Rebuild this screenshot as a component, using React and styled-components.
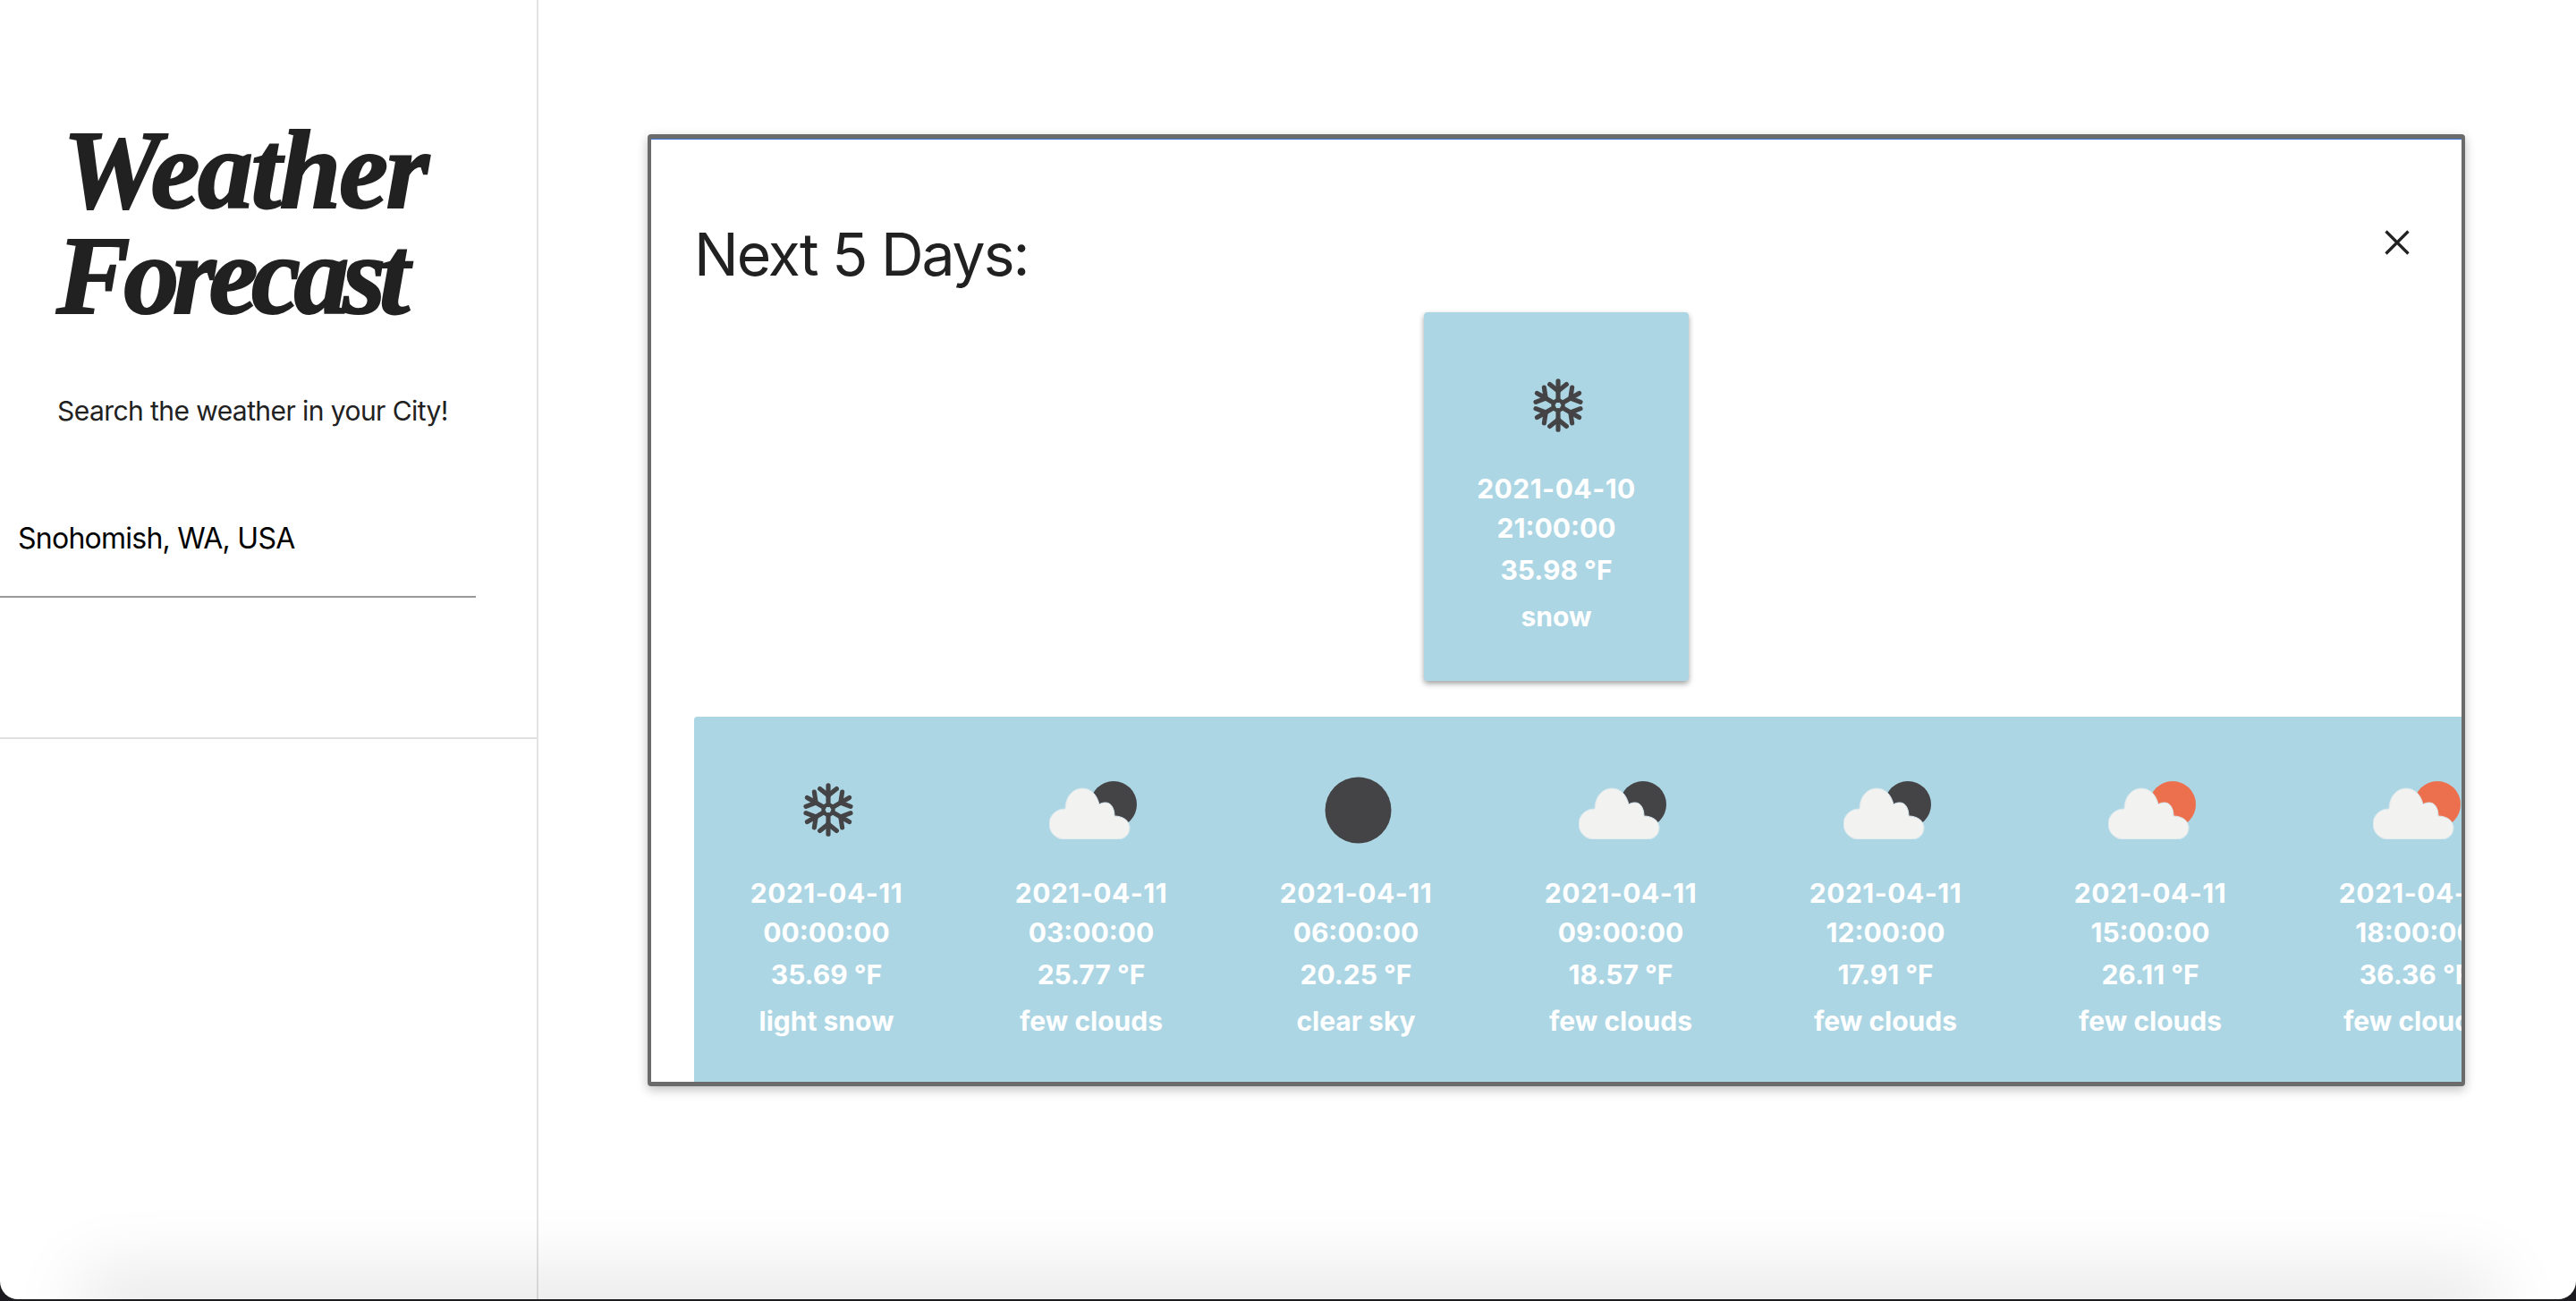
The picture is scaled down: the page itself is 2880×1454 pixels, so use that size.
import styled, { createGlobalStyle } from 'styled-components';

const GlobalStyle = createGlobalStyle`
  html, body {
    margin: 0;
    height: 100%;
    background: #fff;
    overflow: hidden;
    font-family: Inter, "Liberation Sans", sans-serif;
    color: #212121;
  }
`;

const forecast = [
  { date: '2021-04-11', time: '00:00:00', temp: '35.69 °F', desc: 'light snow', icon: 'snow' },
  { date: '2021-04-11', time: '03:00:00', temp: '25.77 °F', desc: 'few clouds', icon: 'cloudNight' },
  { date: '2021-04-11', time: '06:00:00', temp: '20.25 °F', desc: 'clear sky', icon: 'moon' },
  { date: '2021-04-11', time: '09:00:00', temp: '18.57 °F', desc: 'few clouds', icon: 'cloudNight' },
  { date: '2021-04-11', time: '12:00:00', temp: '17.91 °F', desc: 'few clouds', icon: 'cloudNight' },
  { date: '2021-04-11', time: '15:00:00', temp: '26.11 °F', desc: 'few clouds', icon: 'cloudDay' },
  { date: '2021-04-11', time: '18:00:00', temp: '36.36 °F', desc: 'few clouds', icon: 'cloudDay' },
];

const Snowflake = () => (
  <svg width="60" height="60" viewBox="0 0 64 64" fill="none" stroke="#444446" strokeWidth="5.5" strokeLinecap="round">
    <circle cx="32" cy="32" r="6" strokeWidth="4.5" />
    {[0, 60, 120, 180, 240, 300].map((a) => (
      <g key={a} transform={`rotate(${a} 32 32)`}>
        <path d="M32 26V3" />
        <path d="M32 15L22 7" />
        <path d="M32 15L42 7" />
      </g>
    ))}
  </svg>
);

const Moon = () => (
  <svg width="75" height="75" viewBox="0 0 76 76">
    <circle cx="38" cy="38" r="37.5" fill="#444446" />
  </svg>
);

const CloudSun = ({ color }) => (
  <svg width="98" height="65" viewBox="0 0 98 65">
    <circle cx="72" cy="26" r="26" fill={color} />
    <path
      d="M17 65C7.6 65 0 57.4 0 48C0 38.6 7.6 31 17 31L18 31C18 18 26 8 37 8C46 8 53 14 56 26C58 24.5 60.5 24 63 24C69 24 73 30 73 39C82 39 90 44 90 52C90 60 84 65 77 65Z"
      fill="#f2f2f0"
      stroke="#d5e6ec"
      strokeWidth="1"
    />
  </svg>
);

const WeatherIcon = ({ name }) => {
  if (name === 'snow') return <Snowflake />;
  if (name === 'moon') return <Moon />;
  return <CloudSun color={name === 'cloudDay' ? '#ec704e' : '#444446'} />;
};

const DayCard = ({ item, raised }) => (
  <Card $raised={raised}>
    <IconSlot>
      <WeatherIcon name={item.icon} />
    </IconSlot>
    <DateLine>{item.date}</DateLine>
    <Line>{item.time}</Line>
    <TempLine>{item.temp}</TempLine>
    <DescLine>{item.desc}</DescLine>
  </Card>
);

const App = () => {
  return (
    <Page>
      <GlobalStyle />
      <Sidebar>
        <Brand>
          <Title>
            <TitleLine $indent={70} $spacing={-2.5}>Weather</TitleLine>
            <TitleLine $indent={63} $spacing={-7.5}>Forecast</TitleLine>
          </Title>
          <Tagline>Search the weather in your City!</Tagline>
        </Brand>
        <SearchBox>
          <SearchInput defaultValue="Snohomish, WA, USA" />
        </SearchBox>
      </Sidebar>
      <Main>
        <Modal>
          <ModalHeader>
            <Heading>Next 5 Days:</Heading>
            <CloseButton aria-label="close">
              <svg width="28" height="28" viewBox="0 0 28 28" stroke="#212121" strokeWidth="3.2" fill="none">
                <path d="M1.5 1.5L26.5 26.5M26.5 1.5L1.5 26.5" />
              </svg>
            </CloseButton>
          </ModalHeader>
          <Current>
            <DayCard raised item={{ date: '2021-04-10', time: '21:00:00', temp: '35.98 °F', desc: 'snow', icon: 'snow' }} />
          </Current>
          <Strip>
            {forecast.map((item) => (
              <DayCard key={item.time} item={item} />
            ))}
          </Strip>
        </Modal>
      </Main>
      <WindowEdge>
        <BottomShade />
      </WindowEdge>
    </Page>
  );
};

const Page = styled.div`
  display: flex;
  height: 100vh;
  overflow: hidden;
`;

const Sidebar = styled.aside`
  width: 600px;
  flex-shrink: 0;
  box-sizing: content-box;
  border-right: 2px solid #e3e3e3;
`;

const Brand = styled.div`
  height: 548px;
  padding-top: 132px;
  box-sizing: border-box;
`;

const Title = styled.h1`
  margin: 0;
  font-family: "Liberation Serif", serif;
  font-style: italic;
  font-weight: 700;
  font-size: 124px;
  line-height: 118px;
  color: #212121;
  -webkit-text-stroke: 2px #212121;
`;

const TitleLine = styled.span`
  display: block;
  margin-left: ${(p) => p.$indent}px;
  letter-spacing: ${(p) => p.$spacing}px;
`;

const Tagline = styled.p`
  margin: 73px 0 0 64px;
  font-size: 30px;
  line-height: 36px;
  letter-spacing: -0.57px;
  color: #212121;
`;

const SearchBox = styled.div`
  height: 278px;
  box-sizing: border-box;
  border-bottom: 2px solid #e0e0e0;
`;

const SearchInput = styled.input`
  display: block;
  width: 532px;
  height: 120px;
  box-sizing: border-box;
  padding: 0 20px 11px;
  border: 0;
  border-bottom: 2px solid #999;
  outline: none;
  font-family: inherit;
  font-size: 32px;
  letter-spacing: -0.75px;
  color: #000;
  background: transparent;
`;

const Main = styled.main`
  flex: 1;
  padding: 150px 0 0 122px;
`;

const Modal = styled.section`
  width: 2032px;
  height: 1064px;
  box-sizing: border-box;
  border: 5px solid #6b6b6b;
  border-left-width: 4px;
  border-right-width: 4px;
  border-radius: 4px;
  box-shadow: 0 4px 12px rgba(0, 0, 0, 0.25);
  overflow: hidden;
  background: #fff;
`;

const ModalHeader = styled.header`
  display: flex;
  justify-content: space-between;
  align-items: flex-start;
  height: 193px;
  padding: 0 58px 0 48px;
  border-top: 1px solid #3f6fd8;
`;

const Heading = styled.h2`
  margin: 88px 0 0;
  font-weight: 400;
  font-size: 66px;
  line-height: 80px;
  letter-spacing: -2px;
  color: #212121;
`;

const CloseButton = styled.button`
  margin-top: 101px;
  padding: 0;
  border: 0;
  background: none;
  line-height: 0;
`;

const Current = styled.div`
  display: flex;
  justify-content: center;
`;

const Strip = styled.div`
  display: flex;
  margin: 40px 0 0 48px;
  background: #add6e4;
  border-radius: 4px 0 0 4px;
  overflow: hidden;
`;

const Card = styled.article`
  flex: 0 0 296px;
  width: 296px;
  height: 412px;
  box-sizing: border-box;
  padding-top: 64px;
  text-align: center;
  color: #fff;
  background: #add6e4;
  border-radius: 4px;
  box-shadow: ${(p) => (p.$raised ? '0 3px 6px rgba(0, 0, 0, 0.38)' : 'none')};
`;

const IconSlot = styled.div`
  display: flex;
  justify-content: center;
  align-items: center;
  height: 80px;
  margin-bottom: 31px;
  padding-left: 4px;
`;

const Line = styled.div`
  font-weight: 700;
  font-size: 30px;
  line-height: 44px;
`;

const DateLine = styled(Line)`
  letter-spacing: 0.5px;
`;

const TempLine = styled(Line)`
  margin-top: 3px;
`;

const DescLine = styled(Line)`
  margin-top: 8px;
`;

const WindowEdge = styled.div`
  position: fixed;
  inset: 0 0 2px 0;
  border-radius: 0 0 20px 20px;
  box-shadow: 0 0 0 30px #1c1c20;
  overflow: hidden;
  pointer-events: none;
`;

const BottomShade = styled.div`
  position: absolute;
  left: 120px;
  right: 120px;
  bottom: -12px;
  height: 12px;
  box-shadow: 0 0 80px 30px rgba(0, 0, 0, 0.1);
`;

export default App;
